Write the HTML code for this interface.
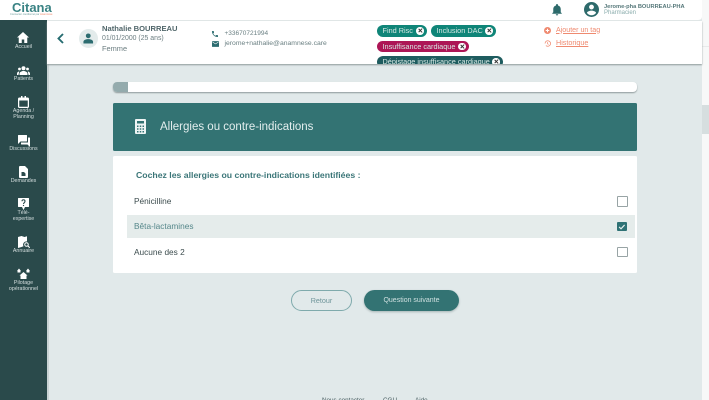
<!DOCTYPE html>
<html lang="fr">
<head>
<meta charset="utf-8">
<title>Citana</title>
<style>
html,body{margin:0;padding:0;width:709px;height:400px;overflow:hidden}
#p{position:relative;width:709px;height:400px;overflow:hidden;background:#e1e9ea;font-family:"Liberation Sans",sans-serif;color:#3f5557}
.a{position:absolute;white-space:nowrap}
svg{position:absolute;display:block}
.nav{position:absolute;left:0;width:47px;text-align:center;color:#d5dfdf;font-size:5.3px;line-height:6px}
.tag{position:absolute;height:11.5px;border-radius:6px;color:#d7e8e4;font-size:7.3px;line-height:11.5px;padding-left:5.5px;box-sizing:border-box;white-space:nowrap}
.x{position:absolute;right:3.5px;top:2px;width:7.5px;height:7.5px;border-radius:50%;background:#fff}
.x:before,.x:after{content:"";position:absolute;left:1.5px;top:3.3px;width:4.5px;height:1px;background:#333;transform:rotate(45deg)}
.x:after{transform:rotate(-45deg)}
.cb{position:absolute;left:617px;width:8.6px;height:8.6px;border:1.2px solid #98a4a5;border-radius:1px;background:#fff}
.opt{position:absolute;left:134px;font-size:8.3px;line-height:12px;white-space:nowrap;color:#3c4c4e}
</style>
</head>
<body>
<div id="p">
<!-- right strip -->
<div class="a" style="left:702px;top:0;width:7px;height:400px;background:#f7f8f8"></div>
<div class="a" style="left:702px;top:46px;width:7px;height:1px;background:#e8eaea"></div>
<div class="a" style="left:702px;top:105px;width:7px;height:29px;background:#d6dedf"></div>

<!-- header -->
<div class="a" style="left:0;top:0;width:702px;height:20px;background:#fff;border-bottom:1px solid #e3e8e8;border-bottom-right-radius:4px"></div>
<div class="a" style="left:12px;top:-1px;font-size:13px;line-height:18px;font-weight:bold;color:#3a8384">Citana</div>
<div class="a" style="left:10px;top:13px;font-size:2.6px;line-height:3px;color:#6d9c9c">Connecter coordonné par <span style="color:#ef8b6f">Anamnèse</span></div>

<svg style="left:551px;top:4px" width="12" height="12" viewBox="0 0 24 24"><path fill="#2d6a6b" d="M12 23c1.3 0 2.4-1 2.4-2.4H9.6C9.6 22 10.7 23 12 23zm7.5-6.5v-6c0-3.7-2-6.8-5.5-7.6V2a2 2 0 0 0-4 0v.9C6.5 3.7 4.5 6.8 4.5 10.5v6L2.5 18.5v1h19v-1z"/></svg>
<svg style="left:584px;top:1.5px" width="15" height="15" viewBox="0 0 24 24"><path fill="#2d6a6b" d="M12 0a12 12 0 1 0 0 24 12 12 0 0 0 0-24zm0 4.2a3.9 3.9 0 1 1 0 7.8 3.9 3.9 0 0 1 0-7.8zm0 17a9 9 0 0 1-7.3-3.8c.1-2.4 4.9-3.7 7.3-3.700s7.2 1.3 7.3 3.7A9 9 0 0 1 12 21.2z"/></svg>
<div class="a" style="left:604px;top:2.5px;font-size:5.7px;line-height:8px;font-weight:bold;color:#56787a">Jerome-pha BOURREAU-PHA</div>
<div class="a" style="left:604px;top:10px;font-size:6px;line-height:7px;color:#8aacac">Pharmacien</div>

<!-- sidebar -->
<div class="a" style="left:0;top:20px;width:47px;height:380px;background:#2a4a4b"></div>
<div class="a" style="left:47px;top:64px;width:1.5px;height:336px;background:#c9d3d4"></div>

<svg style="left:17px;top:32px" width="12" height="11" viewBox="0 0 24 22"><path fill="#fff" d="M12 0 0 11h3.5v11h6v-7h5v7h6V11H24z"/></svg>
<div class="nav" style="top:44px">Accueil</div>

<svg style="left:17px;top:66px" width="13" height="9" viewBox="0 0 26 18"><g fill="#fff"><circle cx="13" cy="4.5" r="4"/><circle cx="5" cy="6" r="2.8"/><circle cx="21" cy="6" r="2.8"/><path d="M5 18v-3c0-3 5-5 8-5s8 2 8 5v3z"/><path d="M0 18v-3c0-2 2-4 4.5-4L3 18zM26 18v-3c0-2-2-4-4.5-4L23 18z"/></g></svg>
<div class="nav" style="top:76px">Patients</div>

<svg style="left:18px;top:96px" width="11" height="12" viewBox="0 0 22 24"><path fill="#fff" fill-rule="evenodd" d="M3 3h3V0h3v3h4V0h3v3h3a3 3 0 0 1 3 3v15a3 3 0 0 1-3 3H3a3 3 0 0 1-3-3V6a3 3 0 0 1 3-3zm-.5 6v12.5h17V9z"/></svg>
<div class="nav" style="top:108px">Agenda /<br>Planning</div>

<svg style="left:17.5px;top:134.5px" width="12" height="12" viewBox="0 0 24 24"><path fill="#fff" d="M0 1a1 1 0 0 1 1-1h16a1 1 0 0 1 1 1v11a1 1 0 0 1-1 1H5l-5 5zM6 15h14V5h3a1 1 0 0 1 1 1v18l-5-5H7a1 1 0 0 1-1-1z"/></svg>
<div class="nav" style="top:145.5px">Discussions</div>

<svg style="left:18.5px;top:166px" width="9" height="12" viewBox="0 0 18 24"><path fill="#fff" fill-rule="evenodd" d="M2 0h10l6 6v16a2 2 0 0 1-2 2H2a2 2 0 0 1-2-2V2a2 2 0 0 1 2-2zM5 12v8h8v-5l-3-3z"/></svg>
<div class="nav" style="top:177.5px">Demandes</div>

<svg style="left:18px;top:198px" width="11" height="12" viewBox="0 0 22 24"><path fill="#fff" d="M1 0h20a1 1 0 0 1 1 1v16a1 1 0 0 1-1 1h-7l-3 6-3-6H1a1 1 0 0 1-1-1V1a1 1 0 0 1 1-1z"/><path fill="none" stroke="#2a4a4b" stroke-width="2.2" d="M8 6.5c0-4 6-4 6 0 0 3-3 3-3 5.5"/><circle cx="11" cy="15" r="1.3" fill="#2a4a4b"/></svg>
<div class="nav" style="top:209.5px">Télé-<br>expertise</div>

<svg style="left:17.5px;top:236px" width="12" height="12" viewBox="0 0 24 24"><path fill="#fff" d="M0 2l7-2 6 2 5-1.5V11a6.5 6.5 0 0 0-7 9.5L7 22l-7 2z"/><circle cx="17" cy="17" r="3.5" fill="none" stroke="#fff" stroke-width="2"/><path d="M19.5 19.5 23.5 23.5" stroke="#fff" stroke-width="2.2"/></svg>
<div class="nav" style="top:247.5px">Annuaire</div>

<svg style="left:17px;top:268px" width="13" height="11" viewBox="0 0 26 22"><path fill="#fff" d="M13 8l8 7h-2v7H7v-7H5zM0 6l4-5 4 5H7v3H1V6zM18 6l4-5 4 5h-1v3h-6V6z"/></svg>
<div class="nav" style="top:280px">Pilotage<br>opérationnel</div>

<!-- patient bar -->
<div class="a" style="left:47px;top:21px;width:655px;height:43px;background:#fff;box-shadow:0 1px 1.5px #8f9a9b;overflow:hidden">
  <div class="tag" style="left:330px;top:4px;width:50px;background:#0f8578">Find Risc<i class="x"></i></div>
  <div class="tag" style="left:384px;top:4px;width:65px;background:#0f8578">Inclusion DAC<i class="x"></i></div>
  <div class="tag" style="left:330px;top:19.5px;width:92px;background:#ad1656">Insuffisance cardiaque<i class="x"></i></div>
  <div class="tag" style="left:330px;top:35px;width:126px;background:#1e5c5f">Dépistage insuffisance cardiaque<i class="x"></i></div>
</div>

<svg style="left:56px;top:33px" width="9" height="11" viewBox="0 0 9 11"><path d="M7 1 2.5 5.5 7 10" fill="none" stroke="#256c70" stroke-width="1.9"/></svg>
<div class="a" style="left:78.5px;top:28.5px;width:19.5px;height:19.5px;border-radius:50%;background:#e3ebeb"></div>
<svg style="left:83px;top:33px" width="10.5" height="10.5" viewBox="0 0 24 24"><circle cx="12" cy="6.5" r="5.5" fill="#2c6c70"/><path fill="#2c6c70" d="M1 24v-4c0-4 6-6 11-6s11 2 11 6v4z"/></svg>
<div class="a" style="left:102px;top:23px;font-size:7.6px;line-height:11px;font-weight:bold;color:#50666a">Nathalie BOURREAU</div>
<div class="a" style="left:102px;top:34px;font-size:6.9px;line-height:10px;color:#6b7d80">01/01/2000 (25 ans)</div>
<div class="a" style="left:102px;top:44px;font-size:7.4px;line-height:10px;color:#6b7d80">Femme</div>

<svg style="left:211px;top:30px" width="8" height="8" viewBox="0 0 24 24"><path fill="#2c6c70" d="M6.6 10.8a15 15 0 0 0 6.6 6.6l2.2-2.2a1 1 0 0 1 1-.25 11.4 11.4 0 0 0 3.6.6 1 1 0 0 1 1 1V20a1 1 0 0 1-1 1A17 17 0 0 1 3 4a1 1 0 0 1 1-1h3.5a1 1 0 0 1 1 1c0 1.3.2 2.5.6 3.6a1 1 0 0 1-.25 1z"/></svg>
<svg style="left:211.5px;top:40.5px" width="7" height="6" viewBox="0 0 24 20"><path fill="#2c6c70" d="M2 0h20a2 2 0 0 1 2 2v16a2 2 0 0 1-2 2H2a2 2 0 0 1-2-2V2a2 2 0 0 1 2-2zm10 11 10-6.5V2L12 8.5 2 2v2.5z"/></svg>
<div class="a" style="left:224.5px;top:28.5px;font-size:6.5px;line-height:10px;color:#6b8083">+33670721994</div>
<div class="a" style="left:224.5px;top:38.5px;font-size:6.8px;line-height:10px;color:#6b8083">jerome+nathalie@anamnese.care</div>

<svg style="left:543.5px;top:26.5px" width="7" height="7" viewBox="0 0 24 24"><circle cx="12" cy="12" r="12" fill="#ef8a70"/><path d="M6 12h12M12 6v12" stroke="#fff" stroke-width="3.5"/></svg>
<svg style="left:543.5px;top:39.5px" width="7" height="7" viewBox="0 0 24 24"><path d="M3.5 12a9.5 9.5 0 1 1 3 7" fill="none" stroke="#ef8a70" stroke-width="2.6"/><path d="M12 7v6l4 2" fill="none" stroke="#ef8a70" stroke-width="2.2"/></svg>
<div class="a" style="left:556px;top:24.5px;font-size:7.1px;line-height:10px;color:#ef8a70;text-decoration:underline">Ajouter un tag</div>
<div class="a" style="left:556px;top:38px;font-size:7.2px;line-height:10px;color:#ef8a70;text-decoration:underline">Historique</div>

<!-- progress -->
<div class="a" style="left:113px;top:82px;width:524px;height:10px;background:#fff;border-radius:4px;box-shadow:0 1px 1.5px #8f9a9b;overflow:hidden"><div style="width:15px;height:10px;background:#94abad"></div></div>

<!-- banner -->
<div class="a" style="left:113px;top:103px;width:524px;height:48px;background:#337373;border-radius:1.5px"></div>
<svg style="left:135px;top:119px" width="11" height="15" viewBox="0 0 22 30"><path fill="#eef4f4" fill-rule="evenodd" d="M2 0h18a2 2 0 0 1 2 2v26a2 2 0 0 1-2 2H2a2 2 0 0 1-2-2V2a2 2 0 0 1 2-2zm2 4v5h14V4zm0 9v3h3v-3zm5.5 0v3h3v-3zM15 13v3h3v-3zM4 18.5v3h3v-3zm5.5 0v3h3v-3zm5.5 0v3h3v-3zM4 24v3h3v-3zm5.5 0v3h3v-3zM15 24v3h3v-3z"/></svg>
<div class="a" style="left:160px;top:120px;font-size:11.5px;line-height:15px;color:#e3eeee">Allergies ou contre-indications</div>

<!-- card -->
<div class="a" style="left:113px;top:156px;width:524px;height:117px;background:#fff;border-radius:1.5px"></div>
<div class="a" style="left:136px;top:169px;font-size:8.7px;line-height:12px;font-weight:bold;color:#3b7678">Cochez les allergies ou contre-indications identifiées :</div>
<div class="a" style="left:126.5px;top:214.5px;width:508.5px;height:23.5px;background:#e5eceb"></div>
<div class="opt" style="top:195px">Pénicilline</div>
<div class="opt" style="top:220px;color:#55878a">Bêta-lactamines</div>
<div class="opt" style="top:245.5px">Aucune des 2</div>
<div class="cb" style="top:196px"></div>
<div class="a" style="left:617px;top:221.5px;width:9.5px;height:9.5px;background:#2f7275;border-radius:1px"></div>
<svg style="left:617px;top:221.5px" width="9.5" height="9.5" viewBox="0 0 9 9"><path d="M2 4.7 3.8 6.4 7.2 2.8" fill="none" stroke="#e6f0f0" stroke-width="1.1"/></svg>
<div class="cb" style="top:246.5px"></div>

<!-- buttons -->
<div class="a" style="left:291px;top:290px;width:61px;height:21px;box-sizing:border-box;border:1px solid #7faaac;border-radius:10.5px;text-align:center;font-size:7.2px;line-height:20px;color:#6f959a">Retour</div>
<div class="a" style="left:364px;top:290px;width:95px;height:21px;background:#337373;border-radius:10.5px;text-align:center;font-size:7px;line-height:22px;color:#cfe0e0;box-shadow:0 1px 2px #a5b3b4">Question suivante</div>

<!-- footer -->
<div class="a" style="left:322px;top:396.5px;font-size:6.3px;line-height:8px;color:#44595c">Nous contacter</div>
<div class="a" style="left:383px;top:396.5px;font-size:6.3px;line-height:8px;color:#44595c">CGU</div>
<div class="a" style="left:415px;top:396.5px;font-size:6.3px;line-height:8px;color:#44595c">Aide</div>
</div>
</body>
</html>
